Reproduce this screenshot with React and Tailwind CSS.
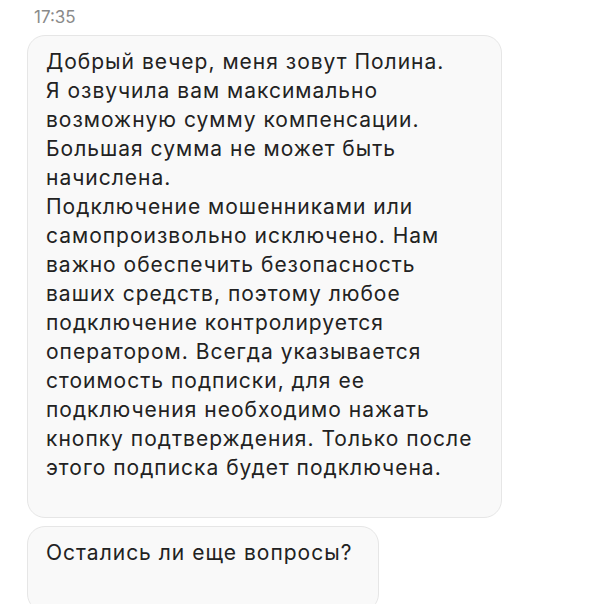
const lines = [
  'Добрый вечер, меня зовут Полина.',
  'Я озвучила вам максимально',
  'возможную сумму компенсации.',
  'Большая сумма не может быть',
  'начислена.',
  'Подключение мошенниками или',
  'самопроизвольно исключено. Нам',
  'важно обеспечить безопасность',
  'ваших средств, поэтому любое',
  'подключение контролируется',
  'оператором. Всегда указывается',
  'стоимость подписки, для ее',
  'подключения необходимо нажать',
  'кнопку подтверждения. Только после',
  'этого подписка будет подключена.',
]

function Bubble({ children, className }) {
  return (
    <div
      className={
        'rounded-[18px] border border-[#e6e6e6] bg-[#f9f9f9] pl-[18px] pr-4 pt-[11px] text-[21px] leading-[29px] tracking-[1px] text-[#222] ' +
        (className || '')
      }
    >
      {children}
    </div>
  )
}

export default function App() {
  return (
    <div className="h-[604px] bg-white font-['Inter',sans-serif] overflow-hidden">
      <div className="h-[35px] pl-[34px] pt-[5px] text-[17px] text-[#8a8a8a]">17:35</div>
      <div className="flex flex-col items-start gap-[8px] pl-[27px]">
        <Bubble className="w-[475px] pb-[35px]">
          {lines.map((l) => (
            <div key={l} className="whitespace-nowrap">{l}</div>
          ))}
        </Bubble>
        <Bubble className="w-[352px] pb-[44px]">
          <div className="whitespace-nowrap">Остались ли еще вопросы?</div>
        </Bubble>
      </div>
    </div>
  )
}
